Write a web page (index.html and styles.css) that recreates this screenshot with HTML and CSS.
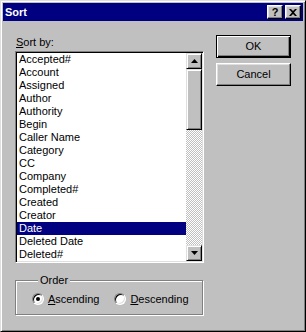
FILE: index.html
```html
<!DOCTYPE html>
<html lang="en">
<head>
    <meta charset="UTF-8">
    <title>Sort</title>
    <link rel="stylesheet" href="styles.css">
</head>
<body>
    <div class="window">
        <div class="titlebar">
            <span class="title">Sort</span>
            <div class="title-btns">
                <span class="tbtn help">?</span>
                <span class="tbtn close">
                    <svg width="8" height="7" viewBox="0 0 8 7"><path d="M0 0h2l2 2 2-2h2L5 3.5 8 7H6L4 5 2 7H0l3-3.5z" fill="#000"/></svg>
                </span>
            </div>
        </div>

        <div class="main">
            <div class="left">
                <div class="label"><u>S</u>ort by:</div>
                <div class="listbox">
                    <ul class="items">
                        <li>Accepted#</li>
                        <li>Account</li>
                        <li>Assigned</li>
                        <li>Author</li>
                        <li>Authority</li>
                        <li>Begin</li>
                        <li>Caller Name</li>
                        <li>Category</li>
                        <li>CC</li>
                        <li>Company</li>
                        <li>Completed#</li>
                        <li>Created</li>
                        <li>Creator</li>
                        <li class="sel">Date</li>
                        <li>Deleted Date</li>
                        <li>Deleted#</li>
                    </ul>
                    <div class="scrollbar">
                        <div class="sbtn"><svg width="7" height="4" viewBox="0 0 7 4"><path d="M3.5 0L7 4H0z" fill="#000"/></svg></div>
                        <div class="thumb"></div>
                        <div class="track"></div>
                        <div class="sbtn"><svg width="7" height="4" viewBox="0 0 7 4"><path d="M0 0h7L3.5 4z" fill="#000"/></svg></div>
                    </div>
                </div>

                <fieldset class="group">
                    <legend>Order</legend>
                    <div class="radios">
                        <label class="radio"><span class="circle checked"></span><span><u>A</u>scending</span></label>
                        <label class="radio"><span class="circle"></span><span><u>D</u>escending</span></label>
                    </div>
                </fieldset>
            </div>

            <div class="right">
                <div class="btn default">OK</div>
                <div class="btn">Cancel</div>
            </div>
        </div>
    </div>
</body>
</html>
```

FILE: styles.css
```css
* {
    margin: 0;
    padding: 0;
    box-sizing: border-box;
}

body {
    background: #c0c0c0;
    font-family: "Liberation Sans", Arial, sans-serif;
    font-size: 11px;
    color: #000;
}

.window {
    width: 306px;
    height: 332px;
    background: #c0c0c0;
    border: 1px solid;
    border-color: #dfdfdf #000 #000 #dfdfdf;
    box-shadow: inset 1px 1px #fff, inset -1px -1px #808080;
    padding: 2px;
}

.titlebar {
    height: 18px;
    background: #000080;
    display: flex;
    align-items: center;
    justify-content: space-between;
    padding: 0 2px;
}

.title {
    color: #fff;
    font-weight: bold;
    font-size: 11px;
}

.title-btns {
    display: flex;
    gap: 2px;
}

.tbtn {
    width: 16px;
    height: 14px;
    background: #c0c0c0;
    border: 1px solid;
    border-color: #fff #000 #000 #fff;
    box-shadow: inset -1px -1px #808080, inset 1px 1px #dfdfdf;
    display: flex;
    align-items: center;
    justify-content: center;
    font-weight: bold;
    font-size: 11px;
    line-height: 12px;
}

.main {
    display: flex;
    gap: 12px;
    padding: 14px 0 0 12px;
}

.left {
    width: 189px;
}

.label {
    line-height: 13px;
    margin: 1px 0 2px 1px;
}

.listbox {
    display: flex;
    height: 212px;
    background: #fff;
    border: 1px solid;
    border-color: #808080 #fff #fff #808080;
    box-shadow: inset 1px 1px #000, inset -1px -1px #dfdfdf;
    padding: 1px;
}

.items {
    list-style: none;
    flex: 1;
    overflow: hidden;
}

.items li {
    height: 13px;
    line-height: 13px;
    padding-left: 2px;
    white-space: nowrap;
}

.items li.sel {
    background: #000080;
    color: #fff;
}

.scrollbar {
    width: 16px;
    display: flex;
    flex-direction: column;
}

.sbtn, .thumb {
    background: #c0c0c0;
    border: 1px solid;
    border-color: #dfdfdf #000 #000 #dfdfdf;
    box-shadow: inset 1px 1px #fff, inset -1px -1px #808080;
}

.sbtn {
    height: 16px;
    display: flex;
    align-items: center;
    justify-content: center;
}

.thumb {
    height: 61px;
}

.track {
    flex: 1;
    background: repeating-conic-gradient(#c0c0c0 0 25%, #fff 0 50%) 0 0 / 2px 2px;
}

.group {
    width: 188px;
    margin-top: 11px;
    border: 1px solid #808080;
    box-shadow: inset 1px 1px #fff, 1px 1px #fff;
    padding: 5px 0 9px 16px;
}

.group legend {
    margin-left: 6px;
    padding: 0 2px;
    line-height: 13px;
    background: #c0c0c0;
}

.radios {
    display: flex;
    height: 13px;
    align-items: center;
}

.radio {
    display: flex;
    align-items: center;
    gap: 4px;
}

.radio + .radio {
    margin-left: 15px;
}

.circle {
    width: 12px;
    height: 12px;
    border-radius: 50%;
    background: #fff;
    border: 1px solid;
    border-color: #808080 #fff #fff #808080;
    box-shadow: inset 1px 1px #000, inset -1px -1px #dfdfdf;
    display: flex;
    align-items: center;
    justify-content: center;
}

.circle.checked::after {
    content: "";
    width: 4px;
    height: 4px;
    border-radius: 50%;
    background: #000;
}

.right {
    width: 75px;
    display: flex;
    flex-direction: column;
    gap: 5px;
}

.btn {
    height: 23px;
    line-height: 21px;
    text-align: center;
    background: #c0c0c0;
    border: 1px solid;
    border-color: #fff #000 #000 #fff;
    box-shadow: inset -1px -1px #808080, inset 1px 1px #dfdfdf;
}

.btn.default {
    border-color: #000;
    box-shadow: inset 1px 1px #fff, inset -1px -1px #000, inset -2px -2px #808080;
}
```
